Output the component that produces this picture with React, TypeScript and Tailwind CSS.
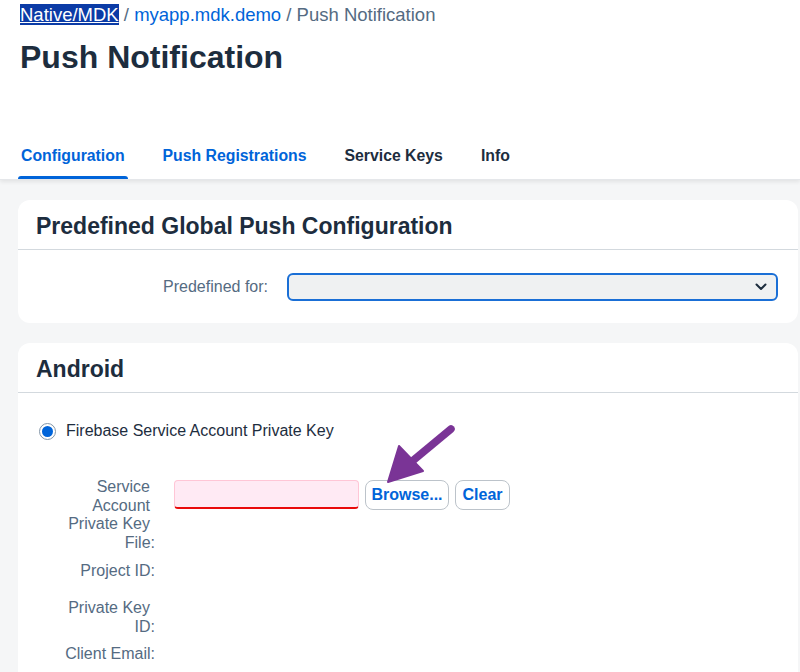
const tabs = [
  { label: 'Configuration', active: true, color: 'text-[#0064d9]' },
  { label: 'Push Registrations', active: false, color: 'text-[#0064d9]' },
  { label: 'Service Keys', active: false, color: 'text-[#1d2d3e]' },
  { label: 'Info', active: false, color: 'text-[#1d2d3e]' },
]

function FormLabel({ text }: { text: string }) {
  return (
    <div className="w-[92px] shrink-0 text-right text-[16px] leading-[18.7px] text-[#556b82]">
      {text}
      <span className="mr-[-5px]">:</span>
    </div>
  )
}

function Card({ title, children }: { title: string; children: React.ReactNode }) {
  return (
    <div className="w-[780px] rounded-[12px] bg-white">
      <div className="flex h-[50px] items-center border-b border-[#d3d9de] px-[18px] pt-[3px] text-[23px] font-bold text-[#1d2d3e]">
        {title}
      </div>
      {children}
    </div>
  )
}

export default function App() {
  return (
    <div className="relative h-[672px] w-[800px] overflow-hidden bg-[#f5f6f7] font-['Liberation_Sans',Arial,sans-serif]">
      <div className="relative z-10 bg-white shadow-[0_2px_4px_rgba(0,0,0,0.08)]">
        <div className="px-[20px] pt-[3px] text-[18.5px] leading-[24px]">
          <span className="bg-[#0b3ba6] text-white underline">Native/MDK</span>
          <span className="text-[#556b82]"> / </span>
          <span className="text-[#0064d9]">myapp.mdk.demo</span>
          <span className="text-[#556b82]"> / Push Notification</span>
        </div>
        <h1 className="mt-[10px] px-[20px] text-[32px] font-bold leading-[40px] text-[#1d2d3e]">Push Notification</h1>
        <div className="mt-[67px] flex gap-[32px] border-b border-[#e5e7ea] pl-[18px]">
          {tabs.map((t) => (
            <div key={t.label} className="flex flex-col">
              <div className={`px-[3px] pb-[8px] text-[15.8px] font-bold leading-[24px] ${t.color}`}>{t.label}</div>
              <div className={`h-[3px] rounded-t-full ${t.active ? 'bg-[#0064d9]' : 'bg-transparent'}`} />
            </div>
          ))}
        </div>
      </div>

      <div className="flex flex-col gap-[20px] px-[18px] pt-[20px]">
        <Card title="Predefined Global Push Configuration">
          <div className="flex h-[73px] items-center">
            <div className="w-[250px] text-right text-[16px] text-[#556b82]">Predefined for:</div>
            <div className="ml-[19px] flex h-[28px] w-[491px] items-center justify-end rounded-[6px] border-2 border-[#1a6fd6] bg-[#eff1f2] pr-[9px]">
              <svg width="12" height="8" viewBox="0 0 12 8" fill="none">
                <path d="M1.5 1.5 L6 6 L10.5 1.5" stroke="#1d2d3e" strokeWidth="2" strokeLinecap="round" strokeLinejoin="round" />
              </svg>
            </div>
          </div>
        </Card>

        <Card title="Android">
          <div className="pt-[28px] pb-[40px]">
            <div className="flex h-[20px] items-center pl-[21px]">
              <div className="flex h-[17px] w-[17px] items-center justify-center rounded-full border border-[#8396a8] bg-white">
                <div className="h-[11px] w-[11px] rounded-full bg-[#0064d9]" />
              </div>
              <span className="ml-[10px] text-[16px] text-[#1d2d3e]">Firebase Service Account Private Key</span>
            </div>

            <div className="mt-[37px] flex flex-col gap-[9px] pl-[40px]">
              <div className="flex min-h-[28px] items-start">
                <FormLabel text="Service Account Private Key File" />
                <div className="ml-[24px] mt-[2px] flex items-start gap-[6px]">
                  <div className="h-[29px] w-[185px] rounded-[4px] border border-[#ffc6d6] border-b-2 border-b-[#e90b0b] bg-[#ffeaf4]" />
                  <button className="h-[30px] w-[84px] rounded-[8px] border border-[#bcc3ca] bg-white text-[16px] font-bold text-[#0064d9]">
                    Browse...
                  </button>
                  <button className="h-[30px] w-[55px] rounded-[8px] border border-[#bcc3ca] bg-white text-[16px] font-bold text-[#0064d9]">
                    Clear
                  </button>
                </div>
              </div>
              <div className="flex min-h-[28px] items-start">
                <FormLabel text="Project ID" />
              </div>
              <div className="flex min-h-[28px] items-start">
                <FormLabel text="Private Key ID" />
              </div>
              <div className="flex min-h-[28px] items-start">
                <FormLabel text="Client Email" />
              </div>
            </div>
          </div>
        </Card>
      </div>

      {/* annotation arrow */}
      <svg className="pointer-events-none absolute left-0 top-0 z-20" width="800" height="672" viewBox="0 0 800 672">
        <path d="M451 429 L404 468" stroke="#7a3496" strokeWidth="7.5" strokeLinecap="round" />
        <path d="M388 482 L399 446 L423 471 Z" fill="#7a3496" stroke="#7a3496" strokeWidth="2" strokeLinejoin="round" />
      </svg>
    </div>
  )
}
